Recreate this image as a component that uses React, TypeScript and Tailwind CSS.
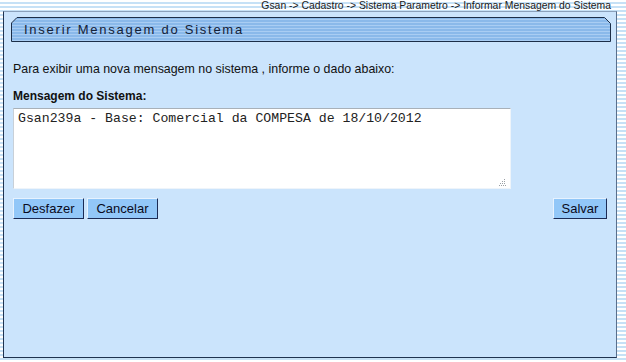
import React from "react";

const sans = "font-['Liberation_Sans',Arial,sans-serif]";

const Button = ({ label, className = "" }: { label: string; className?: string }) => (
  <button
    type="button"
    className={`h-[21px] bg-[#92c7f8] border border-t-[#e6f2ff] border-l-[#e6f2ff] border-r-[#1b2b55] border-b-[#1b2b55] text-[13px] leading-none text-[#0a0a20] ${sans} ${className}`}
  >
    {label}
  </button>
);

const HeaderBar = ({ title }: { title: string }) => (
  <div className="relative h-[25px] w-[600px]">
    <svg className="absolute inset-0" width="600" height="25" viewBox="0 0 600 25">
      <defs>
        <pattern id="hs" width="8" height="3" patternUnits="userSpaceOnUse">
          <rect width="8" height="3" fill="#8ab9ea" />
          <rect y="2" width="8" height="1" fill="#a9cdf3" />
        </pattern>
      </defs>
      <path
        d="M0.5 24.5 V6 L6 0.5 H593.5 L599.5 6.5 V24.5 Z"
        fill="url(#hs)"
        stroke="#1c2e48"
        strokeWidth="1"
      />
    </svg>
    <span
      className={`relative block pl-[13px] pt-[5px] text-[13px] leading-[15px] tracking-[1.75px] text-[#142238] ${sans}`}
    >
      {title}
    </span>
  </div>
);

// dotted resize grip like the old textarea corner
const Grip = () => (
  <svg className="absolute right-[5px] bottom-[3px]" width="7" height="7" viewBox="0 0 7 7">
    {[
      [5, 0],
      [3, 2],
      [5, 2],
      [1, 4],
      [3, 4],
      [5, 4],
      [0, 6],
      [2, 6],
      [4, 6],
      [6, 6],
    ].map(([x, y], i) => (
      <rect key={i} x={x} y={y} width="1" height="1" fill="#9aa0a6" />
    ))}
  </svg>
);

export default function App() {
  return (
    <div className="w-[626px] h-[362px] overflow-hidden bg-[repeating-linear-gradient(to_bottom,#ffffff_0px,#ffffff_2px,#c6e1f6_2px,#c6e1f6_4px)]">
      <div
        className={`h-[11px] pr-[15px] text-right text-[10.4px] leading-[11px] text-[#1a1a1a] ${sans}`}
      >
        Gsan -&gt; Cadastro -&gt; Sistema Parametro -&gt; Informar Mensagem do Sistema
      </div>
      <div className="ml-[3px] w-[614px] h-[347px] bg-[#cbe4fc] border border-t-[#8aa0bb] border-r-[#5a6f8c] border-l-[#1f3350] border-b-[#1f3350] pt-[5px] pl-[7px] pr-[8px]">
        <HeaderBar title="Inserir Mensagem do Sistema" />
        <div className="pl-[2px] pr-[1px]">
          <p className={`mt-[20px] text-[12.4px] leading-[14px] text-[#111] ${sans}`}>
            Para exibir uma nova mensagem no sistema , informe o dado abaixo:
          </p>
          <p className={`mt-[13px] text-[12px] leading-[14px] font-bold text-[#111] ${sans}`}>
            Mensagem do Sistema:
          </p>
          <div className="relative mt-[5px] w-[498px] h-[81px]">
            <textarea
              readOnly
              defaultValue="Gsan239a - Base: Comercial da COMPESA de 18/10/2012"
              className="block w-full h-full resize-none bg-white border border-t-[#a8b0b8] border-l-[#c8d0d8] border-r-[#eef4fa] border-b-[#eef4fa] px-[4px] py-[2px] text-[13.2px] leading-[15px] text-[#222] font-['Liberation_Mono','Courier_New',monospace] outline-none"
            />
            <Grip />
          </div>
          <div className="mt-[9px] flex items-center gap-[3px]">
            <Button label="Desfazer" className="w-[71px]" />
            <Button label="Cancelar" className="w-[71px]" />
            <div className="flex-1" />
            <Button label="Salvar" className="w-[54px]" />
          </div>
        </div>
      </div>
    </div>
  );
}
